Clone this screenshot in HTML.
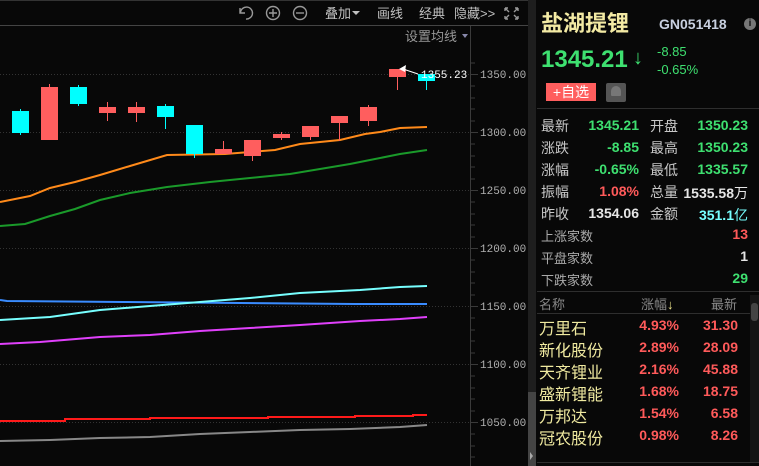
<!DOCTYPE html>
<html><head><meta charset="utf-8"><style>
*{margin:0;padding:0;box-sizing:border-box}
body{width:759px;height:466px;background:#080808;overflow:hidden;position:relative;font-family:"Liberation Sans","Noto Sans CJK SC",sans-serif;}
.a{position:absolute;white-space:nowrap}
.cn{font-family:"Liberation Sans","Noto Sans CJK SC",sans-serif}
.l{color:#c8c8c8;font-size:14px}
.g{color:#3ee070}.r{color:#ff5a5a}.w{color:#e6e6e6}.c{color:#7ff}
.num{font-family:"Liberation Sans",sans-serif;font-weight:bold;font-size:14px}
.y{color:#f0eaa0;font-size:16px}
</style></head><body>
<svg class="a" style="left:0;top:0" width="536" height="466">
<line x1="0" y1="0.5" x2="536" y2="0.5" stroke="#333"/>
<line x1="0" y1="25.5" x2="528" y2="25.5" stroke="#444"/>
<g stroke="#333" stroke-dasharray="1,2">
<line x1="0" y1="74.5" x2="470" y2="74.5"/><line x1="0" y1="132.5" x2="470" y2="132.5"/><line x1="0" y1="190.5" x2="470" y2="190.5"/><line x1="0" y1="248.5" x2="470" y2="248.5"/><line x1="0" y1="306.5" x2="470" y2="306.5"/><line x1="0" y1="364.5" x2="470" y2="364.5"/><line x1="0" y1="422.5" x2="470" y2="422.5"/>
</g>
<line x1="470.5" y1="26" x2="470.5" y2="466" stroke="#3a3a3a"/>
<g stroke="#3a3a3a">
<line x1="471" y1="63" x2="475" y2="63"/><line x1="471" y1="74.5" x2="478" y2="74.5"/><line x1="471" y1="86" x2="475" y2="86"/><line x1="471" y1="98" x2="475" y2="98"/><line x1="471" y1="109" x2="475" y2="109"/><line x1="471" y1="121" x2="475" y2="121"/><line x1="471" y1="132.5" x2="478" y2="132.5"/><line x1="471" y1="144" x2="475" y2="144"/><line x1="471" y1="156" x2="475" y2="156"/><line x1="471" y1="167" x2="475" y2="167"/><line x1="471" y1="179" x2="475" y2="179"/><line x1="471" y1="190.5" x2="478" y2="190.5"/><line x1="471" y1="202" x2="475" y2="202"/><line x1="471" y1="214" x2="475" y2="214"/><line x1="471" y1="225" x2="475" y2="225"/><line x1="471" y1="237" x2="475" y2="237"/><line x1="471" y1="248.5" x2="478" y2="248.5"/><line x1="471" y1="260" x2="475" y2="260"/><line x1="471" y1="272" x2="475" y2="272"/><line x1="471" y1="283" x2="475" y2="283"/><line x1="471" y1="295" x2="475" y2="295"/><line x1="471" y1="306.5" x2="478" y2="306.5"/><line x1="471" y1="318" x2="475" y2="318"/><line x1="471" y1="330" x2="475" y2="330"/><line x1="471" y1="341" x2="475" y2="341"/><line x1="471" y1="353" x2="475" y2="353"/><line x1="471" y1="364.5" x2="478" y2="364.5"/><line x1="471" y1="376" x2="475" y2="376"/><line x1="471" y1="388" x2="475" y2="388"/><line x1="471" y1="399" x2="475" y2="399"/><line x1="471" y1="411" x2="475" y2="411"/><line x1="471" y1="422.5" x2="478" y2="422.5"/><line x1="471" y1="434" x2="475" y2="434"/><line x1="471" y1="446" x2="475" y2="446"/><line x1="471" y1="457" x2="475" y2="457"/>
</g>
<g font-family="Liberation Mono,monospace" font-size="11" fill="#b0b0b0">
<text x="480" y="78">1350.00</text><text x="480" y="136">1300.00</text><text x="480" y="194">1250.00</text><text x="480" y="252">1200.00</text><text x="480" y="310">1150.00</text><text x="480" y="368">1100.00</text><text x="480" y="426">1050.00</text>
</g>
<rect x="528" y="0" width="8" height="466" fill="#1e1e1e"/>
<rect x="528" y="392" width="8" height="74" fill="#444"/>
<path d="M530 452 L533 456 L530 460Z" fill="#aaa"/>
<line x1="536.5" y1="0" x2="536.5" y2="466" stroke="#333"/>
<g fill="none" stroke-width="2">
<polyline stroke="#ff8a1a" points="0,202 30,196 50,188 75,182 100,175 130,166 167,155 225,154 250,152 275,150 300,144 340,140 365,134 380,132 400,128 427,127"/>
<polyline stroke="#1a9a2a" points="0,226 25,224 50,216 75,209 100,200 130,193 167,187 210,182 260,177 290,174 320,169 350,164 370,160 400,154 427,150"/>
<polyline stroke="#3a8cff" points="0,300 7,301 123,302 240,303 355,304 427,304"/>
<polyline stroke="#7ff" points="0,320 50,317 100,310 150,306 200,302 250,298 300,293 360,290 400,287 427,286"/>
<polyline stroke="#e040fb" points="0,344 40,342 100,337 150,335 200,331 250,328 300,325 360,321 400,319 427,317"/>
<polyline stroke="#ff1a1a" points="0,421 65,421 65,419 150,419 150,418 268,418 268,417 355,417 355,416 413,416 413,415 427,415"/>
<polyline stroke="#888" points="0,441 50,440 100,438 150,437 200,434 250,432 300,430 350,429 400,427 427,425"/>
</g>
<g stroke-width="1">
<line x1="20.5" y1="109" x2="20.5" y2="135" stroke="#0ff"/><rect x="12" y="111" width="17" height="22" fill="#0ff"/>
<line x1="49.5" y1="84" x2="49.5" y2="90" stroke="#ff5e5e"/><rect x="41" y="87" width="17" height="53" fill="#ff5e5e"/>
<line x1="78.5" y1="85" x2="78.5" y2="106" stroke="#0ff"/><rect x="70" y="87" width="17" height="17" fill="#0ff"/>
<line x1="107.5" y1="102" x2="107.5" y2="121" stroke="#ff5e5e"/><rect x="99" y="107" width="17" height="6" fill="#ff5e5e"/>
<line x1="136.5" y1="102" x2="136.5" y2="122" stroke="#ff5e5e"/><rect x="128" y="107" width="17" height="6" fill="#ff5e5e"/>
<line x1="165.5" y1="104" x2="165.5" y2="129" stroke="#0ff"/><rect x="157" y="106" width="17" height="11" fill="#0ff"/>
<line x1="194.5" y1="125" x2="194.5" y2="158" stroke="#0ff"/><rect x="186" y="125" width="17" height="29" fill="#0ff"/>
<line x1="223.5" y1="141" x2="223.5" y2="150" stroke="#ff5e5e"/><rect x="215" y="149" width="17" height="5" fill="#ff5e5e"/>
<line x1="252.5" y1="150" x2="252.5" y2="161" stroke="#ff5e5e"/><rect x="244" y="140" width="17" height="16" fill="#ff5e5e"/>
<line x1="281.5" y1="132" x2="281.5" y2="140" stroke="#ff5e5e"/><rect x="273" y="134" width="17" height="4" fill="#ff5e5e"/>
<line x1="310.5" y1="130" x2="310.5" y2="140" stroke="#ff5e5e"/><rect x="302" y="126" width="17" height="11" fill="#ff5e5e"/>
<line x1="339.5" y1="120" x2="339.5" y2="141" stroke="#ff5e5e"/><rect x="331" y="116" width="17" height="7" fill="#ff5e5e"/>
<line x1="368.5" y1="105" x2="368.5" y2="126" stroke="#ff5e5e"/><rect x="360" y="107" width="17" height="14" fill="#ff5e5e"/>
<line x1="397.5" y1="70" x2="397.5" y2="90" stroke="#ff5e5e"/><rect x="389" y="69" width="17" height="8" fill="#ff5e5e"/>
<line x1="426.5" y1="76" x2="426.5" y2="90" stroke="#0ff"/><rect x="418" y="74" width="17" height="7" fill="#0ff"/>
</g>
<line x1="403" y1="69" x2="418" y2="74" stroke="#fff"/><path d="M399 69 L406 65 L405 72Z" fill="#fff"/>
<text x="421" y="78" font-family="Liberation Mono,monospace" font-size="11" fill="#fff">1355.23</text>
<g stroke="#999" fill="none" stroke-width="1.4">
<path d="M240 8 L240 13 L245 13 M240.5 12.5 A6 6 0 1 1 246 19"/>
<circle cx="273" cy="13" r="6.5"/><path d="M269 13 H277 M273 9 V17"/>
<circle cx="300" cy="13" r="6.5"/><path d="M296 13 H304"/>
<path d="M505 8 L509 12 M505 8 H508 M505 8 V11 M518 8 L514 12 M518 8 H515 M518 8 V11 M505 19 L509 15 M505 19 H508 M505 19 V16 M518 19 L514 15 M518 19 H515 M518 19 V16"/>
</g>
<g font-family="Liberation Sans,Noto Sans CJK SC,sans-serif" font-size="13" fill="#c0c0c0">
<text x="325" y="18">叠加</text><path d="M352 11 L360 11 L356 15Z" fill="#c0c0c0"/>
<text x="377" y="18">画线</text><text x="419" y="18">经典</text><text x="454" y="18">隐藏&gt;&gt;</text>
<text x="405" y="41" fill="#999">设置均线</text>
</g>
<path d="M462 34 L468 34 L465 38Z" fill="#88a"/>
</svg>
<div class="a cn" style="left:541px;top:6px;font-size:22px;font-weight:bold;color:#f3eaa4">盐湖提锂</div>
<div class="a" style="left:659px;top:16px;font-size:14px;font-weight:bold;color:#c8d0e0">GN051418</div>
<div class="a" style="left:744px;top:18px;width:12px;height:12px;border-radius:6px;background:#777;color:#111;font-size:10px;font-weight:bold;text-align:center;line-height:12px">i</div>
<div class="a g" style="left:541px;top:46px;font-size:24px;font-weight:bold">1345.21</div>
<div class="a g" style="left:633px;top:47px;font-size:20px;font-weight:bold">↓</div>
<div class="a g num" style="left:657px;top:44px;font-size:13px;font-weight:normal">-8.85</div>
<div class="a g num" style="left:657px;top:62px;font-size:13px;font-weight:normal">-0.65%</div>
<div class="a cn" style="left:546px;top:83px;width:50px;height:18px;background:#ff5e5e;color:#fff;font-size:14px;text-align:center;line-height:18px">+自选</div>
<div class="a" style="left:606px;top:83px;width:20px;height:19px;background:#555;border-radius:2px"></div>
<div class="a" style="left:611px;top:86px;width:10px;height:10px;background:#777;border-radius:5px 5px 1px 1px"></div>
<div class="a" style="left:537px;top:108px;width:222px;height:1px;background:#2e2e2e"></div>

<div class="a l" style="left:541px;top:116px">最新</div><div class="a g num" style="right:120px;top:117px">1345.21</div>
<div class="a l" style="left:650px;top:116px">开盘</div><div class="a g num" style="right:11px;top:117px">1350.23</div>
<div class="a l" style="left:541px;top:138px">涨跌</div><div class="a g num" style="right:120px;top:139px">-8.85</div>
<div class="a l" style="left:650px;top:138px">最高</div><div class="a g num" style="right:11px;top:139px">1350.23</div>
<div class="a l" style="left:541px;top:160px">涨幅</div><div class="a g num" style="right:120px;top:161px">-0.65%</div>
<div class="a l" style="left:650px;top:160px">最低</div><div class="a g num" style="right:11px;top:161px">1335.57</div>
<div class="a l" style="left:541px;top:182px">振幅</div><div class="a r num" style="right:120px;top:183px">1.08%</div>
<div class="a l" style="left:650px;top:182px">总量</div><div class="a w num" style="right:11px;top:183px">1535.58<span class="cn" style="font-weight:normal">万</span></div>
<div class="a l" style="left:541px;top:204px">昨收</div><div class="a w num" style="right:120px;top:205px">1354.06</div>
<div class="a l" style="left:650px;top:204px">金额</div><div class="a c num" style="right:11px;top:205px">351.1<span class="cn" style="font-weight:normal">亿</span></div>

<div class="a l" style="left:541px;top:226px;font-size:13px;color:#aaa">上涨家数</div><div class="a r num" style="right:11px;top:226px">13</div>
<div class="a l" style="left:541px;top:248px;font-size:13px;color:#aaa">平盘家数</div><div class="a w num" style="right:11px;top:248px">1</div>
<div class="a l" style="left:541px;top:270px;font-size:13px;color:#aaa">下跌家数</div><div class="a g num" style="right:11px;top:270px">29</div>
<div class="a" style="left:537px;top:291px;width:222px;height:1px;background:#2e2e2e"></div>
<div class="a" style="left:537px;top:313px;width:213px;height:1px;background:#2e2e2e"></div>
<div class="a l" style="left:539px;top:294px;font-size:13px;color:#888">名称</div>
<div class="a l" style="left:641px;top:294px;font-size:13px;color:#888">涨幅<span style="color:#f0e68c">↓</span></div>
<div class="a l" style="left:711px;top:294px;font-size:13px;color:#888">最新</div>
<div class="a" style="left:750px;top:295px;width:9px;height:168px;background:#151515"></div>
<div class="a" style="left:751px;top:303px;width:7px;height:18px;background:#444;border-radius:3px"></div>

<div class="a y" style="left:539px;top:315px">万里石</div><div class="a r num" style="right:80px;top:317px">4.93%</div><div class="a r num" style="right:21px;top:317px">31.30</div>
<div class="a y" style="left:539px;top:337px">新化股份</div><div class="a r num" style="right:80px;top:339px">2.89%</div><div class="a r num" style="right:21px;top:339px">28.09</div>
<div class="a y" style="left:539px;top:359px">天齐锂业</div><div class="a r num" style="right:80px;top:361px">2.16%</div><div class="a r num" style="right:21px;top:361px">45.88</div>
<div class="a y" style="left:539px;top:381px">盛新锂能</div><div class="a r num" style="right:80px;top:383px">1.68%</div><div class="a r num" style="right:21px;top:383px">18.75</div>
<div class="a y" style="left:539px;top:403px">万邦达</div><div class="a r num" style="right:80px;top:405px">1.54%</div><div class="a r num" style="right:21px;top:405px">6.58</div>
<div class="a y" style="left:539px;top:425px">冠农股份</div><div class="a r num" style="right:80px;top:427px">0.98%</div><div class="a r num" style="right:21px;top:427px">8.26</div>
<div class="a" style="left:537px;top:462px;width:222px;height:1px;background:#2e2e2e"></div>
</body></html>
